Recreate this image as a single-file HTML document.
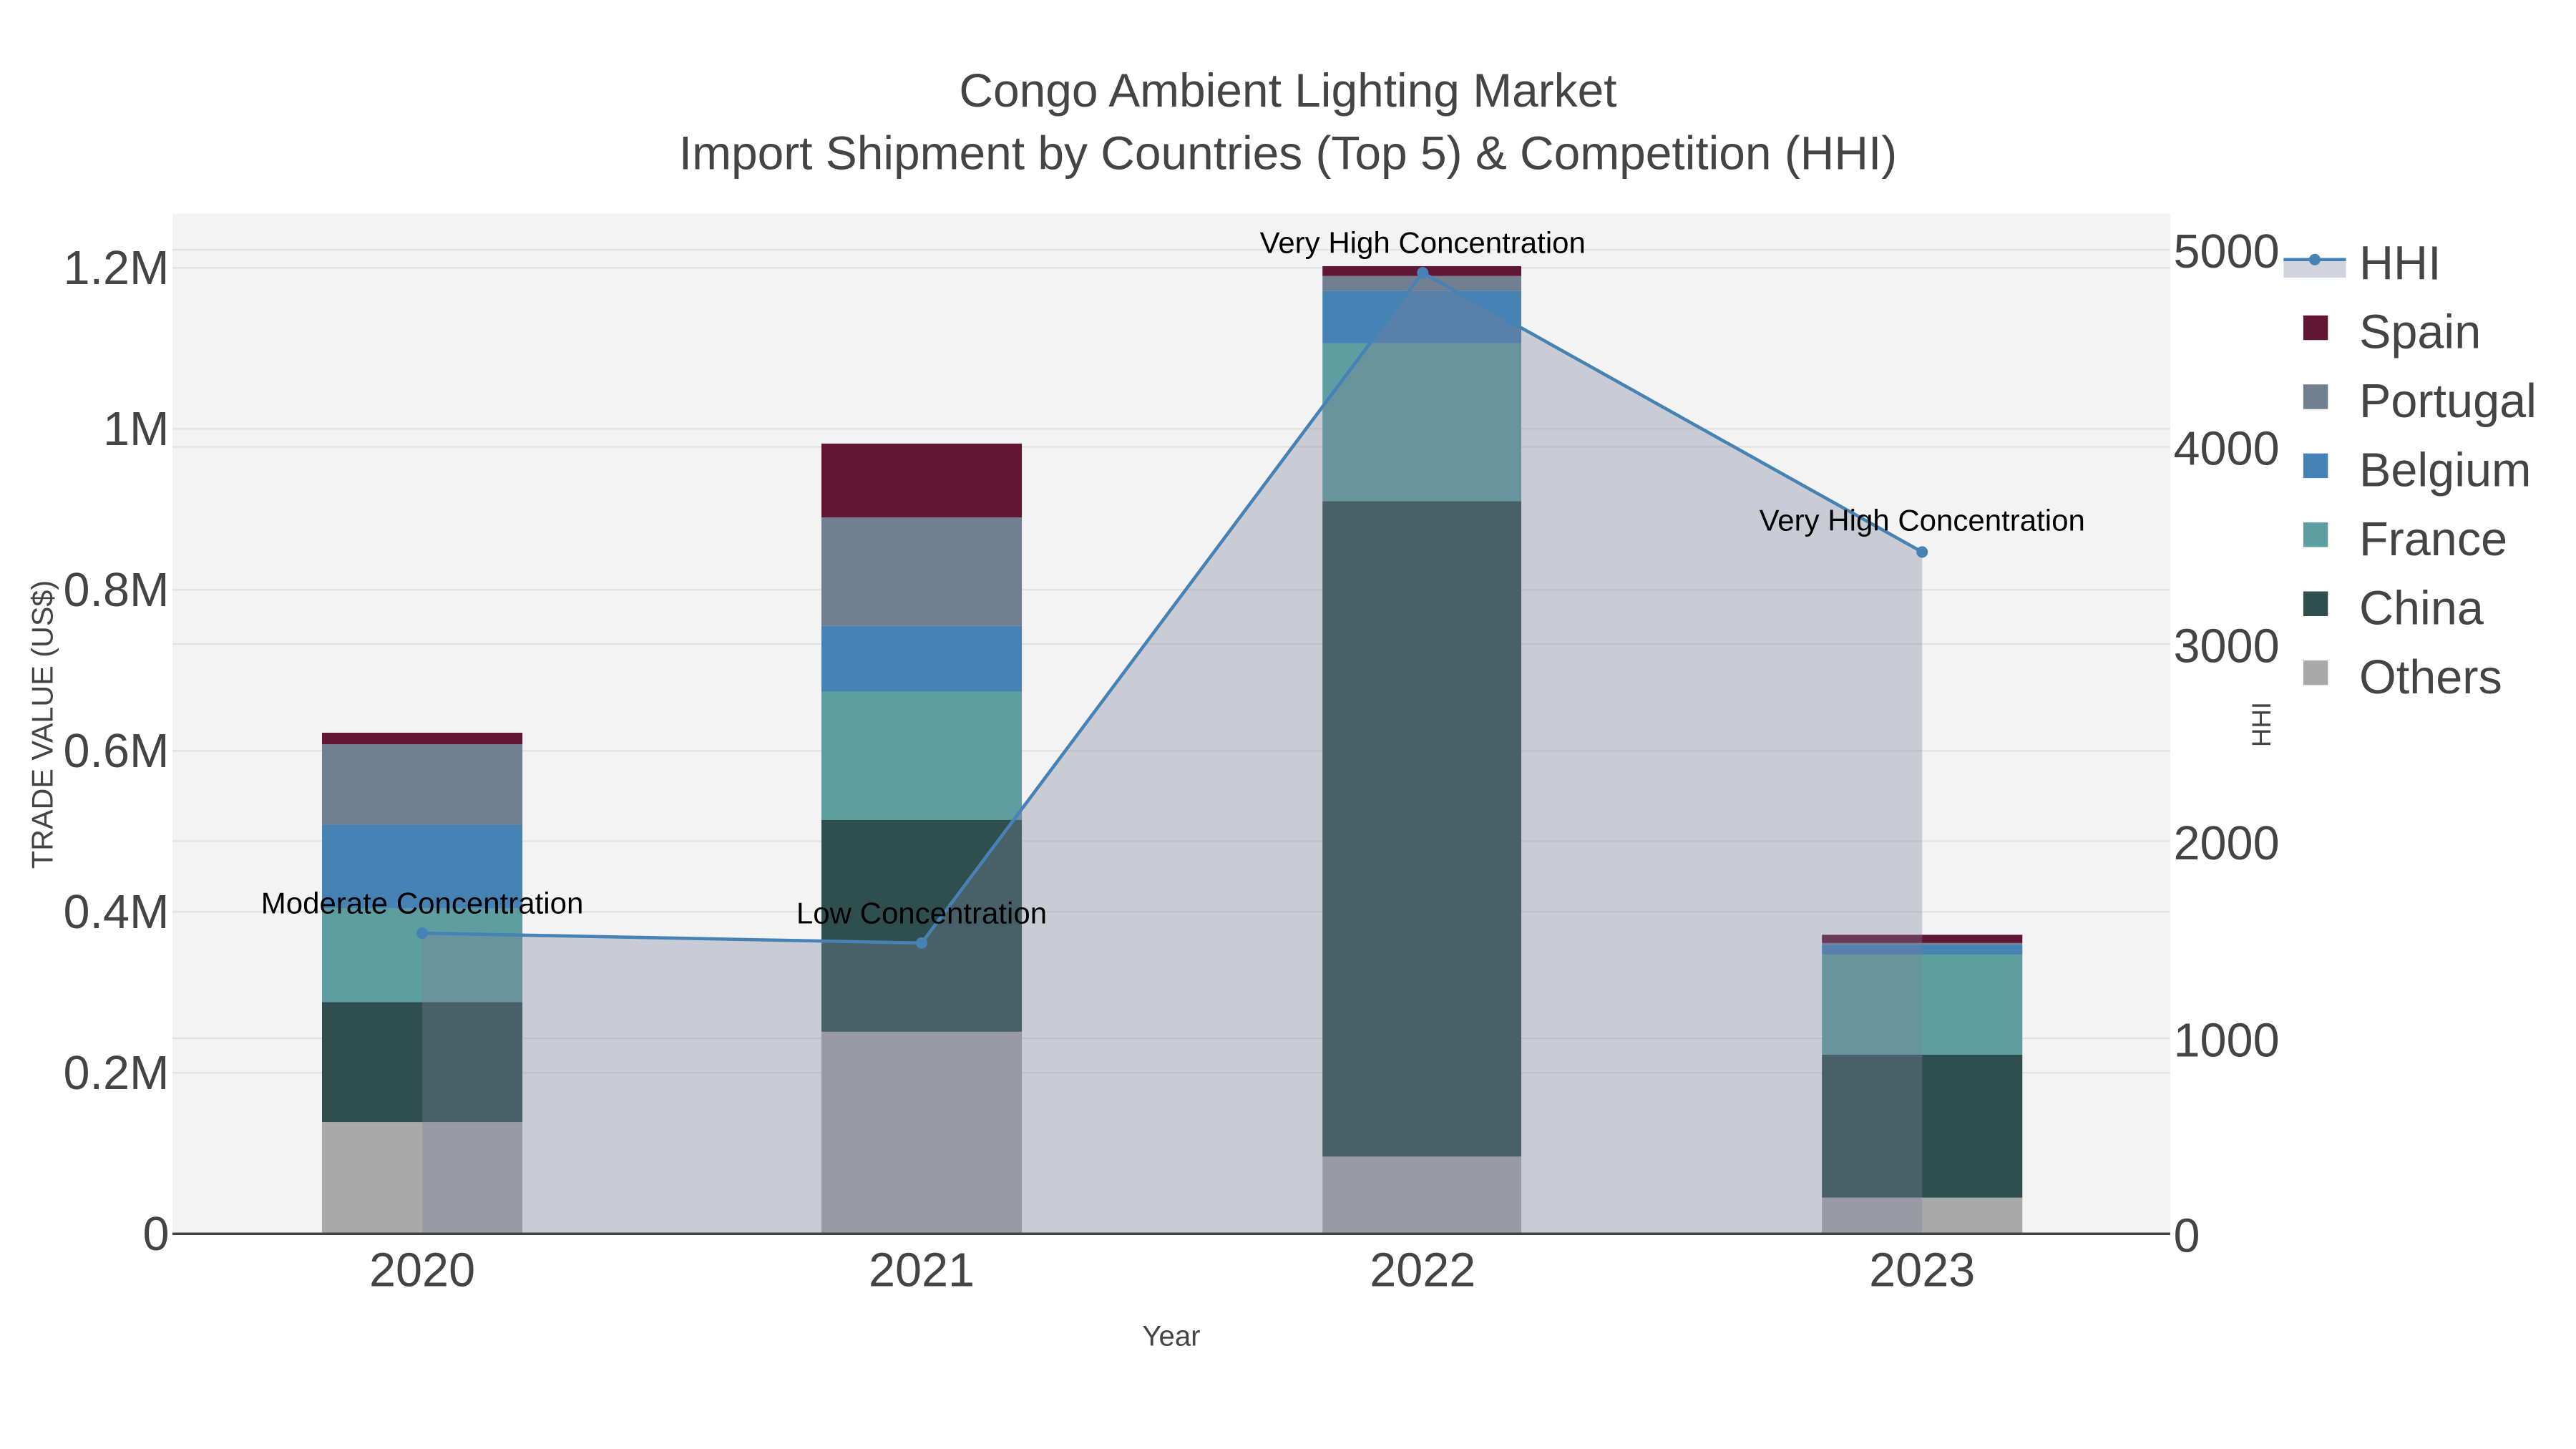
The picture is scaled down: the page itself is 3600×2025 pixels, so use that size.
<!DOCTYPE html>
<html><head><meta charset="utf-8"><style>
html,body{margin:0;padding:0;background:#fff;}
svg{display:block;}
text{font-family:"Liberation Sans",sans-serif;}
</style></head><body>
<svg width="3600" height="2025" viewBox="0 0 1568 882" xmlns="http://www.w3.org/2000/svg">
<rect width="1568" height="882" fill="#fff"/>
<rect x="105" y="130" width="1216" height="621" fill="#f3f3f3"/>
<g stroke="#e2e2e2" stroke-width="1">
<line x1="105" x2="1321" y1="653" y2="653"/><line x1="105" x2="1321" y1="555" y2="555"/>
<line x1="105" x2="1321" y1="457" y2="457"/><line x1="105" x2="1321" y1="359" y2="359"/>
<line x1="105" x2="1321" y1="261" y2="261"/><line x1="105" x2="1321" y1="163" y2="163"/>
<line x1="105" x2="1321" y1="632" y2="632"/><line x1="105" x2="1321" y1="512" y2="512"/>
<line x1="105" x2="1321" y1="392" y2="392"/><line x1="105" x2="1321" y1="272" y2="272"/>
<line x1="105" x2="1321" y1="152" y2="152"/>
</g>
<!-- 2020 -->
<rect x="196" y="683" width="122" height="68" fill="#a9a9a9"/>
<rect x="196" y="610" width="122" height="73" fill="#2f4f4f"/>
<rect x="196" y="553" width="122" height="57" fill="#5f9ea0"/>
<rect x="196" y="502" width="122" height="51" fill="#4682b4"/>
<rect x="196" y="453" width="122" height="49" fill="#708090"/>
<rect x="196" y="446" width="122" height="7" fill="#611634"/>
<!-- 2021 -->
<rect x="500" y="628" width="122" height="123" fill="#a9a9a9"/>
<rect x="500" y="499" width="122" height="129" fill="#2f4f4f"/>
<rect x="500" y="421" width="122" height="78" fill="#5f9ea0"/>
<rect x="500" y="381" width="122" height="40" fill="#4682b4"/>
<rect x="500" y="315" width="122" height="66" fill="#708090"/>
<rect x="500" y="270" width="122" height="45" fill="#611634"/>
<!-- 2022 -->
<rect x="805" y="704" width="121" height="47" fill="#a9a9a9"/>
<rect x="805" y="305" width="121" height="399" fill="#2f4f4f"/>
<rect x="805" y="209" width="121" height="96" fill="#5f9ea0"/>
<rect x="805" y="177" width="121" height="32" fill="#4682b4"/>
<rect x="805" y="168" width="121" height="9" fill="#708090"/>
<rect x="805" y="162" width="121" height="6" fill="#611634"/>
<!-- 2023 -->
<rect x="1109" y="729" width="122" height="22" fill="#a9a9a9"/>
<rect x="1109" y="642" width="122" height="87" fill="#2f4f4f"/>
<rect x="1109" y="581" width="122" height="61" fill="#5f9ea0"/>
<rect x="1109" y="575" width="122" height="6" fill="#4682b4"/>
<rect x="1109" y="574" width="122" height="1" fill="#708090"/>
<rect x="1109" y="569" width="122" height="5" fill="#611634"/>
<!-- HHI area -->
<path d="M257,568 L561,574 L866,166 L1170,336 L1170,751 L257,751 Z" fill="rgb(119,130,151)" fill-opacity="0.34"/>
<line x1="105" x2="1321" y1="751" y2="751" stroke="#444" stroke-width="1.5"/>
<polyline points="257,568 561,574 866,166 1170,336" fill="none" stroke="#4682b4" stroke-width="2"/>
<g fill="#4682b4"><circle cx="257" cy="568" r="3.5"/><circle cx="561" cy="574" r="3.5"/><circle cx="866" cy="166" r="3.5"/><circle cx="1170" cy="336" r="3.5"/></g>
<!-- annotations -->
<g font-size="18.3" fill="#000" text-anchor="middle">
<text x="257" y="556">Moderate Concentration</text>
<text x="561" y="562">Low Concentration</text>
<text x="866" y="154">Very High Concentration</text>
<text x="1170" y="323">Very High Concentration</text>
</g>
<!-- titles -->
<g fill="#444" text-anchor="middle" font-size="28.7">
<text x="784" y="65">Congo Ambient Lighting Market</text>
<text x="784" y="103">Import Shipment by Countries (Top 5) &amp; Competition (HHI)</text>
</g>
<!-- left ticks -->
<g fill="#444" font-size="29" text-anchor="end">
<text x="103" y="761">0</text><text x="103" y="663">0.2M</text><text x="103" y="565">0.4M</text>
<text x="103" y="467">0.6M</text><text x="103" y="369">0.8M</text><text x="103" y="271">1M</text>
<text x="103" y="173">1.2M</text>
</g>
<!-- right ticks -->
<g fill="#444" font-size="29">
<text x="1323" y="762">0</text><text x="1323" y="643">1000</text><text x="1323" y="523">2000</text>
<text x="1323" y="403">3000</text><text x="1323" y="283">4000</text><text x="1323" y="163">5000</text>
</g>
<rect x="1388" y="130" width="180" height="300" fill="#fff"/>
<text x="1382" y="441" fill="#444" font-size="16" text-anchor="middle" transform="rotate(-90 1382 441)">HHI</text>
<text x="32" y="441" fill="#444" font-size="18" text-anchor="middle" transform="rotate(-90 32 441)">TRADE VALUE (US$)</text>
<!-- x ticks -->
<g fill="#444" font-size="29" text-anchor="middle">
<text x="257" y="783">2020</text><text x="561" y="783">2021</text><text x="866" y="783">2022</text><text x="1170" y="783">2023</text>
</g>
<text x="713" y="819" fill="#444" font-size="17.5" text-anchor="middle">Year</text>
<!-- legend -->
<rect x="1390" y="159" width="38" height="10" fill="rgb(119,130,151)" fill-opacity="0.34"/>
<line x1="1390" x2="1428" y1="158" y2="158" stroke="#4682b4" stroke-width="2"/>
<circle cx="1409" cy="158" r="3.5" fill="#4682b4"/>
<g font-size="29" fill="#444">
<text x="1436" y="170">HHI</text>
<text x="1436" y="212">Spain</text>
<text x="1436" y="254">Portugal</text>
<text x="1436" y="296">Belgium</text>
<text x="1436" y="338">France</text>
<text x="1436" y="380">China</text>
<text x="1436" y="422">Others</text>
</g>
<rect x="1402" y="192" width="15" height="15" fill="#611634"/>
<rect x="1402" y="234" width="15" height="15" fill="#708090"/>
<rect x="1402" y="276" width="15" height="15" fill="#4682b4"/>
<rect x="1402" y="318" width="15" height="15" fill="#5f9ea0"/>
<rect x="1402" y="360" width="15" height="15" fill="#2f4f4f"/>
<rect x="1402" y="402" width="15" height="15" fill="#a9a9a9"/>
</svg>
</body></html>
